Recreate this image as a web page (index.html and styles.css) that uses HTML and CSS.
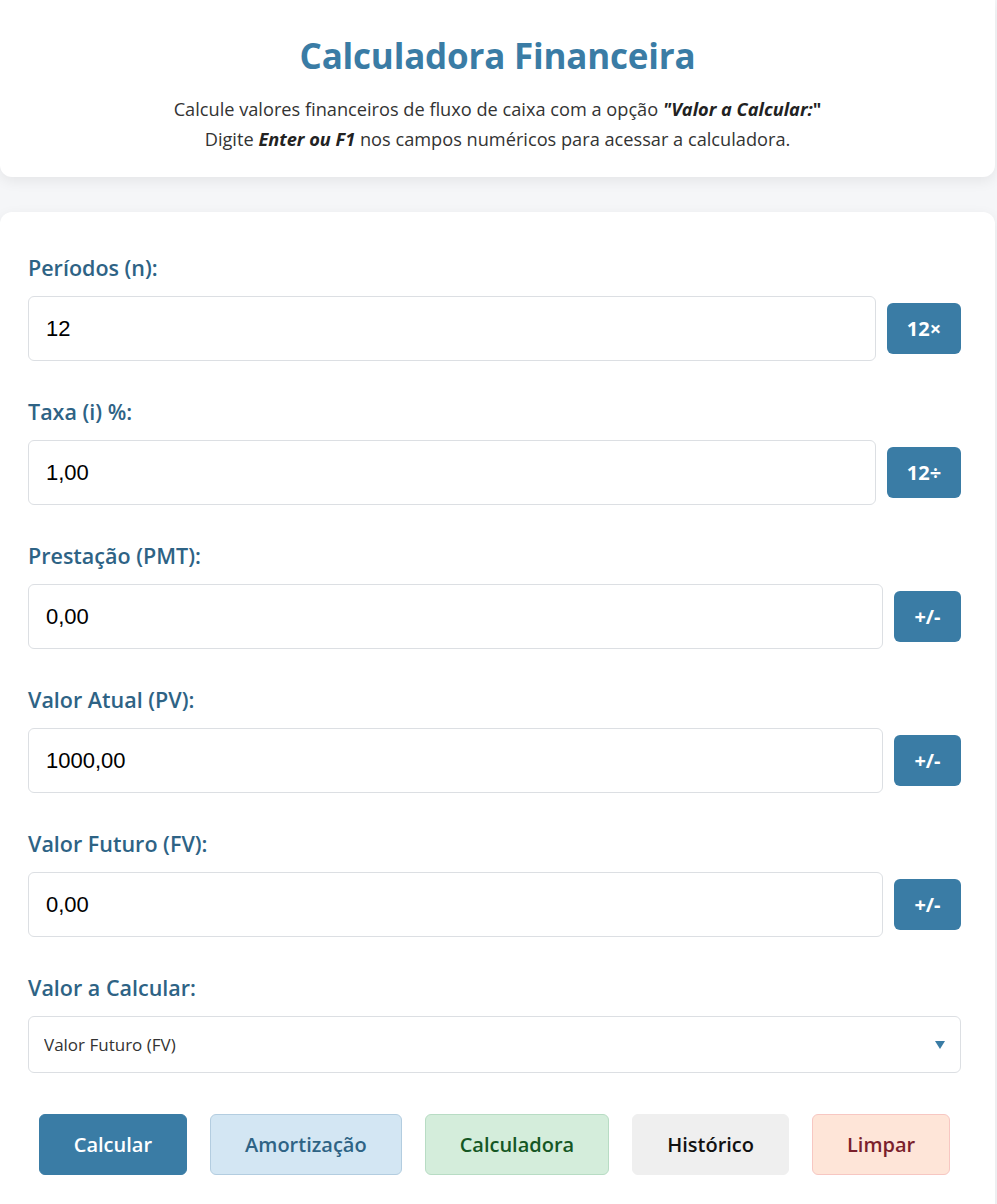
FILE: index.html
```html
<!DOCTYPE html>
<html lang="pt-BR">
<head>
<meta charset="utf-8">
<title>Calculadora Financeira</title>
<link rel="stylesheet" href="styles.css">
</head>
<body>
<div class="page">
  <header class="card header-card">
    <h1 class="title">Calculadora Financeira</h1>
    <p class="subtitle">Calcule valores financeiros de fluxo de caixa com a opção <strong><em>"Valor a Calcular:</em>"</strong><br>
    Digite <strong><em>Enter ou F1</em></strong> nos campos numéricos para acessar a calculadora.</p>
  </header>

  <main class="card form-card">
    <div class="field">
      <label class="field-label">Períodos (n):</label>
      <div class="field-row">
        <input class="field-input" type="text" value="12">
        <button class="side-btn wide">12×</button>
      </div>
    </div>
    <div class="field">
      <label class="field-label">Taxa (i) %:</label>
      <div class="field-row">
        <input class="field-input" type="text" value="1,00">
        <button class="side-btn wide">12÷</button>
      </div>
    </div>
    <div class="field">
      <label class="field-label">Prestação (PMT):</label>
      <div class="field-row">
        <input class="field-input" type="text" value="0,00">
        <button class="side-btn">+/-</button>
      </div>
    </div>
    <div class="field">
      <label class="field-label">Valor Atual (PV):</label>
      <div class="field-row">
        <input class="field-input" type="text" value="1000,00">
        <button class="side-btn">+/-</button>
      </div>
    </div>
    <div class="field">
      <label class="field-label">Valor Futuro (FV):</label>
      <div class="field-row">
        <input class="field-input" type="text" value="0,00">
        <button class="side-btn">+/-</button>
      </div>
    </div>
    <div class="field select-field">
      <label class="field-label">Valor a Calcular:</label>
      <div class="select-wrap">
        <select class="field-select">
          <option>Valor Futuro (FV)</option>
          <option>Valor Atual (PV)</option>
          <option>Prestação (PMT)</option>
          <option>Taxa (i)</option>
          <option>Períodos (n)</option>
        </select>
      </div>
    </div>
    <div class="actions">
      <button class="action-btn btn-primary">Calcular</button>
      <button class="action-btn btn-info">Amortização</button>
      <button class="action-btn btn-success">Calculadora</button>
      <button class="action-btn btn-neutral">Histórico</button>
      <button class="action-btn btn-danger">Limpar</button>
    </div>
  </main>
</div>
</body>
</html>
```

FILE: styles.css
```css
* { box-sizing: border-box; }

html, body {
  margin: 0;
  padding: 0;
}

body {
  background: #f5f6f8;
  font-family: "Open Sans", "Noto Sans", sans-serif;
  color: #333;
  overflow: hidden;
}

.page {
  width: 995px;
  display: flex;
  flex-direction: column;
  gap: 35px;
}

.card {
  background: #ffffff;
  box-shadow: 0 4px 14px rgba(0, 0, 0, 0.07);
}

.header-card {
  border-radius: 0 0 12px 12px;
  padding: 34px 20px 23px;
  text-align: center;
}

.title {
  margin: 0;
  font-size: 35px;
  line-height: 44px;
  font-weight: 700;
  color: #3a7ca5;
  letter-spacing: -0.2px;
}

.subtitle {
  margin: 16px 0 0;
  font-size: 18.2px;
  line-height: 30px;
  color: #333;
}

.subtitle strong { font-weight: 700; color: #222; }

.form-card {
  border-radius: 12px 12px 0 0;
  padding: 41px 34px 40px 28px;
}

.field {
  margin-bottom: 36px;
}

.field-label {
  display: block;
  font-size: 21.5px;
  line-height: 29px;
  font-weight: 600;
  color: #2e6385;
  margin-bottom: 14px;
}

.field-row {
  display: flex;
  align-items: center;
  gap: 11px;
}

.field-input {
  flex: 1;
  min-width: 0;
  height: 65px;
  border: 1px solid #dcdfe3;
  border-radius: 6px;
  padding: 0 17px;
  font-family: "Liberation Sans", Arial, sans-serif;
  font-size: 22px;
  color: #000;
  background: #fff;
  outline: none;
}

.side-btn {
  height: 51px;
  width: 67px;
  border: none;
  border-radius: 6px;
  background: #3a7ca5;
  color: #fff;
  font-family: "Open Sans", "Noto Sans", sans-serif;
  font-size: 20px;
  font-weight: 700;
  cursor: pointer;
}

.side-btn.wide { width: 74px; }

.select-field { margin-bottom: 41px; }

.select-wrap {
  position: relative;
}

.select-wrap::after {
  content: "";
  position: absolute;
  right: 16px;
  top: 25px;
  width: 0;
  height: 0;
  border-left: 5px solid transparent;
  border-right: 5px solid transparent;
  border-top: 8px solid #3a7ca5;
  pointer-events: none;
}

.field-select {
  width: 100%;
  height: 57px;
  border: 1px solid #dcdfe3;
  border-radius: 6px;
  padding: 0 15px;
  font-family: "Open Sans", "Noto Sans", sans-serif;
  font-size: 17px;
  color: #333;
  background: #fff;
  appearance: none;
  -webkit-appearance: none;
  outline: none;
}

.actions {
  display: flex;
  justify-content: center;
  gap: 23px;
}

.action-btn {
  height: 61px;
  padding: 0 34px;
  border-radius: 6px;
  border: 1px solid transparent;
  font-family: "Open Sans", "Noto Sans", sans-serif;
  font-size: 20px;
  font-weight: 600;
  cursor: pointer;
}

.btn-primary { background: #3a7ca5; color: #fff; border-color: #3a7ca5; }
.btn-info { background: #d3e6f3; color: #2e6385; border-color: #b3cde0; }
.btn-success { background: #d4eddb; color: #155724; border-color: #b8dcc4; }
.btn-neutral { background: #efefef; color: #111; border-color: #efefef; }
.btn-danger { background: #fee5d8; color: #7b1f2c; border-color: #f7c7c2; }
```
